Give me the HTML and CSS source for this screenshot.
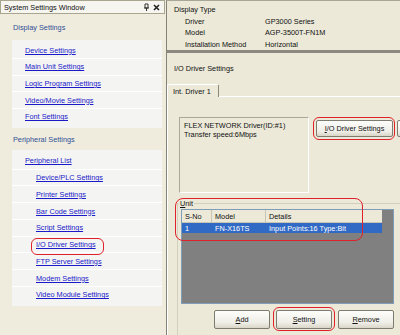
FILE: index.html
```html
<!DOCTYPE html>
<html>
<head>
<meta charset="utf-8">
<link rel="stylesheet" href="styles.css">
</head>
<body>
<div class="left">
  <div class="titlebar">
    <span>System Settings Window</span>
    <span class="tb-icons">
      <svg width="7" height="8" viewBox="0 0 7 8"><path d="M2 1h3v4H2z M1 5h5 M3.5 5v3" fill="none" stroke="#333" stroke-width="1"/></svg>
      <svg width="7" height="7" viewBox="0 0 7 7"><path d="M1 1l5 5M6 1L1 6" stroke="#222" stroke-width="1.6"/></svg>
    </span>
  </div>
  <div class="sec-title first">Display Settings</div>
  <div class="box">
    <div class="row"><a>Device Settings</a></div>
    <div class="row"><a>Main Unit Settings</a></div>
    <div class="row"><a>Logic Program Settings</a></div>
    <div class="row"><a>Video/Movie Settings</a></div>
    <div class="row"><a>Font Settings</a></div>
  </div>
  <div class="sec-title">Peripheral Settings</div>
  <div class="box box2">
    <div class="row"><a>Peripheral List</a></div>
    <div class="row sub"><a>Device/PLC Settings</a></div>
    <div class="row sub"><a>Printer Settings</a></div>
    <div class="row sub"><a>Bar Code Settings</a></div>
    <div class="row sub"><a>Script Settings</a></div>
    <div class="row sub"><a>I/O Driver Settings</a></div>
    <div class="row sub"><a>FTP Server Settings</a></div>
    <div class="row sub"><a>Modem Settings</a></div>
    <div class="row sub"><a>Video Module Settings</a></div>
  </div>
</div>
<div class="right">
  <div class="disp">
    <div class="line">Display Type</div>
    <div class="kv"><span class="k">Driver</span><span>GP3000 Series</span></div>
    <div class="kv"><span class="k">Model</span><span>AGP-3500T-FN1M</span></div>
    <div class="kv"><span class="k">Installation Method</span><span>Horizontal</span></div>
  </div>
  <div class="thick"></div>
  <div class="io-title">I/O Driver Settings</div>
  <div class="tabs"><div class="tab">Int. Driver 1</div><div class="tab-fill"></div></div>
  <div class="panel">
    <div class="top-row">
      <div class="info">FLEX NETWORK Driver(ID:#1)<br>Transfer speed:6Mbps</div>
      <div class="btn btn-io"><u>I</u>/O Driver Settings</div>
      <div class="btn btn-cut"></div>
    </div>
    <fieldset class="unit">
      <legend><u>U</u>nit</legend>
      <div class="list">
        <div class="lrow head"><span class="c1">S-No</span><span class="c2">Model</span><span class="c3">Details</span></div>
        <div class="lrow sel"><span class="c1">1</span><span class="c2">FN-X16TS</span><span class="c3">Input Points:16 Type:Bit</span></div>
      </div>
      <div class="btns">
        <div class="btn b3"><u>A</u>dd</div>
        <div class="btn b3"><u>S</u>etting</div>
        <div class="btn b3"><u>R</u>emove</div>
      </div>
    </fieldset>
  </div>
</div>
<div class="mark m1"></div>
<div class="mark m2"></div>
<div class="mark m3"></div>
<div class="mark m4"></div>
</body>
</html>
```
FILE: styles.css
```css
html, body { margin: 0; padding: 0; }
body {
  width: 400px; height: 335px; overflow: hidden;
  display: flex; position: relative;
  background: #ece9d8;
  font-family: "Liberation Sans", Arial, sans-serif;
  font-size: 7.3px; color: #111;
}
.left {
  width: 166px; flex: none;
  background: #efecdd;
  display: flex; flex-direction: column;
}
.titlebar {
  width: 158px; height: 12px;
  border: 1px solid #a9a690;
  background: #f6f5ef;
  display: flex; align-items: center; justify-content: space-between;
  padding: 0 2px 0 3px;
  margin-right: 3px;
}
.tb-icons { display: flex; gap: 3px; align-items: center; padding-right: 2px; }
.sec-title {
  height: 22px; display: flex; align-items: center;
  padding-left: 13px; color: #2f4f96;
}
.sec-title.first { height: 26px; }
.box {
  margin-left: 12px; width: 150px;
  background: #f4f4f3;
  padding: 2.5px 0 4px;
}
.box2 { padding: 2.5px 0 3px; }
.row {
  height: 15.6px; border-bottom: 1px solid #fff;
  display: flex; align-items: center; padding-left: 13px;
}
.box2 .row { height: 15.75px; }
.row.sub { padding-left: 24px; }
.row:last-child { border-bottom: none; }
a { color: #1a1ac8; text-decoration: underline; }

.right {
  flex: 1; display: flex; flex-direction: column;
  border-left: 1px solid #858378;
  border-top: 1px solid #a8a696;
}
.disp { height: 49px; padding: 3px 0 0 7px; box-sizing: border-box; }
.line, .kv { height: 11.5px; display: flex; align-items: center; }
.kv { padding-left: 11px; }
.kv .k { width: 80px; }
.thick { height: 3px; background: #8c8a80; }
.io-title { height: 31px; display: flex; align-items: center; padding-left: 7px; }
.tabs { display: flex; height: 13px; }
.tab {
  padding: 0 7px 0 5px; display: flex; align-items: center;
  border-left: 1px solid #fff; border-top: 1px solid #fff;
  border-right: 1px solid #8a8878;
  border-radius: 2px 2px 0 0;
}
.tab-fill { flex: 1; border-bottom: 1px solid #fff; }
.panel { flex: 1; border-left: 1px solid #fff; display: flex; flex-direction: column; }
.top-row { display: flex; padding: 20px 0 0 11px; align-items: flex-start; }
.info {
  width: 130px; height: 76px; box-sizing: border-box;
  border: 1px solid #fff; border-left-color: #aca899; border-top-color: #aca899;
  padding: 3px 4px; line-height: 9px;
}
.btn {
  height: 17px; display: flex; align-items: center; justify-content: center;
  background: linear-gradient(#fdfdfb, #eeede6 70%, #d9d6c8);
  border: 1px solid #7e7c70; border-radius: 2px; box-sizing: border-box;
}
.btn-io { width: 77px; margin: 3px 0 0 7px; }
.btn-cut { width: 10px; margin: 3px 0 0 4px; }
.unit {
  margin: 6px 4px 0 9px; padding: 0 0 2px 3px;
  border: 1px solid #d2cfbd; border-bottom: none; border-right: none;
  flex: 1; display: flex; flex-direction: column;
}
legend { padding: 0 1px; margin-left: -2px; }
.list {
  width: 213px; height: 95px; background: #808080;
  border: 1px solid #7f9db9; box-sizing: border-box; margin-top: 1px;
}
.lrow { display: flex; height: 11px; width: 200px; align-items: center; }
.head { background: #ece9d8; border-bottom: 1px solid #c8c5b4; height: 13px; box-sizing: border-box; }
.sel { background: #316ac5; color: #fff; height: 10px; }
.lrow span { padding-left: 3px; box-sizing: border-box; height: 100%; display: flex; align-items: center; }
.c1 { width: 30px; }
.c2 { width: 54px; }
.c3 { width: 116px; }
.head .c1, .head .c2 { border-right: 1px solid #c8c5b4; }
.btns { display: flex; gap: 6px; padding: 6px 0 0 33px; }
.b3 { width: 56px; height: 19px; }
.mark {
  position: absolute; border: 1.5px solid #e0202a; border-radius: 6px;
  box-sizing: border-box;
}
.m1 { left: 31px; top: 238px; width: 73px; height: 17px; }
.m2 { left: 313px; top: 117px; width: 82px; height: 23px; }
.m3 { left: 175px; top: 198px; width: 188px; height: 43px; border-radius: 8px; }
.m4 { left: 273px; top: 307px; width: 62px; height: 24px; }
```
